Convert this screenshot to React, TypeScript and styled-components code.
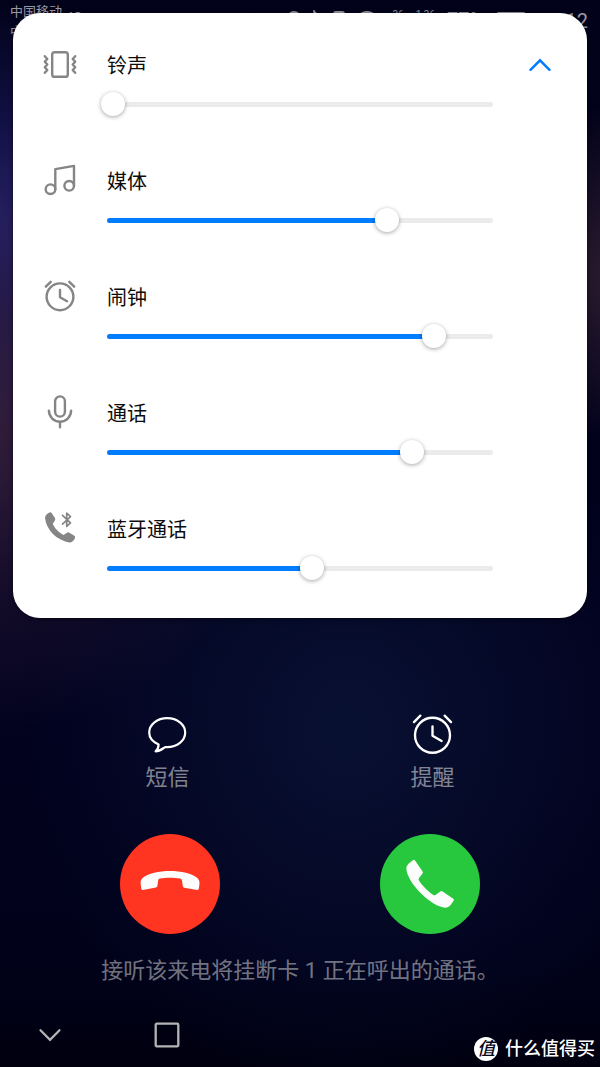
import React, { useState } from "react";
import styled, { createGlobalStyle } from "styled-components";

const GlobalStyle = createGlobalStyle`
  * { box-sizing: border-box; }
  body {
    margin: 0;
    background: #00000f;
    font-family: Roboto, "Noto Sans CJK SC", sans-serif;
  }
  button {
    margin: 0;
    padding: 0;
    border: 0;
    background: none;
    font: inherit;
    color: inherit;
    cursor: pointer;
  }
  svg { display: block; }
`;

const Screen = styled.div`
  position: relative;
  display: flex;
  flex-direction: column;
  min-height: 100vh;
  overflow: hidden;
  background:
    radial-gradient(ellipse 330px 310px at -40px 430px, rgba(74, 44, 74, 0.72), rgba(74, 44, 74, 0.28) 50%, rgba(74, 44, 74, 0) 100%),
    radial-gradient(ellipse 260px 220px at -20px 220px, rgba(34, 32, 110, 0.9), rgba(34, 32, 110, 0) 100%),
    radial-gradient(ellipse 160px 170px at 103% 275px, rgba(50, 32, 50, 0.85), rgba(50, 32, 50, 0) 100%),
    radial-gradient(ellipse 320px 360px at 58% 730px, rgba(9, 18, 52, 0.9), rgba(9, 18, 52, 0) 100%),
    linear-gradient(#02021a, #01011c 40%, #02021f 65%, #01011a 90%, #00000f);
`;

const StatusBar = styled.div`
  display: flex;
  justify-content: space-between;
  height: 38px;
  padding: 3px 12px 0 10px;
  color: rgba(255, 255, 255, 0.6);
`;

const Carriers = styled.div`
  display: flex;
  flex-direction: column;
  font-size: 13px;
  line-height: 17px;
`;

const Carrier = styled.span`
  display: flex;
  align-items: flex-start;
  gap: 4px;
`;

const Network = styled.small`
  padding-top: 7px;
  font-size: 13px;
  line-height: 13px;
`;

const StatusIcons = styled.div`
  display: flex;
  align-items: flex-start;
  gap: 12px;
  padding-top: 7px;
`;

const StatusText = styled.span<{ $size: number }>`
  font-size: ${(p) => p.$size}px;
  line-height: ${(p) => p.$size}px;
`;

const Clock = styled.time`
  padding-top: 1px;
  font-size: 20px;
  line-height: 20px;
`;

const VolumePanel = styled.section`
  position: relative;
  display: flex;
  flex-direction: column;
  gap: 50px;
  margin: -25px 13px 0;
  padding: 37px 0 38px;
  border-radius: 27px;
  background: #fff;
  box-shadow: 0 1px 5px rgba(0, 0, 0, 0.5);
`;

const VolumeRow = styled.div`
  display: grid;
  grid-template-columns: 94px 1fr 94px;
  grid-template-rows: 30px 24px;
  row-gap: 12px;
  align-items: center;
`;

const RowIcon = styled.span`
  justify-self: center;
  color: #858585;
`;

const RowLabel = styled.label`
  padding-top: 2px;
  color: #0c0c0c;
  font-size: 20px;
  line-height: 28px;
`;

const CollapseButton = styled.button`
  justify-self: center;
  padding: 4px;
  color: #007dff;
`;

const SliderArea = styled.div`
  grid-column: 2;
  display: grid;
  align-items: center;
  > * { grid-area: 1 / 1; }
`;

const Track = styled.div`
  height: 5px;
  border-radius: 3px;
  background: #ebebeb;
  overflow: hidden;
`;

const Fill = styled.div`
  height: 100%;
  background: #007dff;
`;

const Range = styled.input`
  appearance: none;
  height: 24px;
  margin: 0 -6px;
  background: transparent;
  cursor: pointer;

  &::-webkit-slider-runnable-track {
    height: 24px;
    background: transparent;
  }
  &::-webkit-slider-thumb {
    appearance: none;
    width: 24px;
    height: 24px;
    border-radius: 50%;
    background: #fff;
    box-shadow: 0 1px 4px rgba(0, 0, 0, 0.36);
  }
`;

const Actions = styled.div`
  display: grid;
  grid-template-columns: 1fr 1fr;
  margin-top: 93px;
  padding: 0 35px;
`;

const Action = styled.button`
  display: flex;
  flex-direction: column;
  align-items: center;
  gap: 5px;
  justify-self: center;
  color: #fff;
`;

const ActionIcon = styled.span`
  display: flex;
  align-items: center;
  height: 48px;
`;

const ActionLabel = styled.span`
  color: rgba(255, 255, 255, 0.5);
  font-size: 22px;
  line-height: 28px;
`;

const Calls = styled.div`
  display: grid;
  grid-template-columns: 1fr 1fr;
  justify-items: center;
  margin-top: 42px;
  padding: 0 40px;
`;

const CallButton = styled.button<{ $color: string }>`
  width: 100px;
  height: 100px;
  border-radius: 50%;
  background: ${(p) => p.$color};
  color: #fcfcfc;
`;

const Notice = styled.p`
  margin: 22px 0 17px;
  color: rgba(255, 255, 255, 0.46);
  font-size: 22px;
  line-height: 30px;
  text-align: center;
`;

const NavBar = styled.nav`
  display: flex;
  height: 64px;
  margin-top: auto;
  color: #b4b4b4;
`;

const NavButton = styled.button<{ $width: number }>`
  display: flex;
  align-items: center;
  justify-content: center;
  width: ${(p) => p.$width}px;
`;

const Watermark = styled.div`
  position: absolute;
  right: 5px;
  bottom: 6px;
  display: flex;
  align-items: center;
  gap: 7px;
  color: #fff;
  font-size: 18px;
  font-weight: 500;
  line-height: 24px;
`;

const Badge = styled.span`
  width: 24px;
  height: 24px;
  border-radius: 50%;
  background: #fff;
  color: #05051a;
  font-size: 18px;
  font-style: italic;
  text-align: center;
`;

type IconProps = { size?: number; stroke?: number };

const LineIcon = ({ size = 36, stroke = 2.4, children }: IconProps & { children: React.ReactNode }) => (
  <svg
    width={size}
    height={size}
    viewBox="0 0 36 36"
    fill="none"
    stroke="currentColor"
    strokeWidth={stroke}
    strokeLinecap="round"
    strokeLinejoin="round"
    aria-hidden="true"
  >
    {children}
  </svg>
);

const VibrateIcon = () => (
  <LineIcon>
    <rect x="10.2" y="5.2" width="15.6" height="24.6" rx="2.4" />
    <path d="M2.8 9.2 5.3 12 2.8 14.7 5.3 17.5 2.8 20.3 5.3 23 2.8 25.8M33.2 9.2 30.7 12 33.2 14.7 30.7 17.5 33.2 20.3 30.7 23 33.2 25.8" />
  </LineIcon>
);

const MusicIcon = () => (
  <LineIcon>
    <circle cx="8.5" cy="26.2" r="4.8" />
    <circle cx="27.2" cy="22.8" r="4.8" />
    <path d="M13.3 26.2V6.1L32 2.9V22.8" />
  </LineIcon>
);

const AlarmIcon = (props: IconProps) => (
  <LineIcon {...props}>
    <circle cx="18" cy="17.8" r="13.4" />
    <path d="M18 11V18.2L25 22.2M3.8 7.7 8.7 2.8M32.2 7.7 27.3 2.8" />
  </LineIcon>
);

const MicIcon = () => (
  <LineIcon>
    <rect x="13.1" y="1.4" width="9.8" height="20.2" rx="4.9" />
    <path d="M6.9 15.6C6.9 22.2 12 26.6 18 26.6S29.1 22.2 29.1 15.6M18 26.6V32.2" />
  </LineIcon>
);

const BluetoothCallIcon = () => (
  <LineIcon stroke={1.7}>
    <path
      d="M3 6.9C3 4.7 5 2.5 7.4 1.4Q8.9 .8 9.8 2.2L12.9 7Q13.6 8.2 12.9 9.4L10.8 12.7C12.5 17.3 16.8 21.3 21.6 23.9L25 21.7Q26.2 21 27.4 21.7L32.3 24.8Q33.6 25.8 32.9 27.2C31.7 29.8 29.4 31.8 27.2 31.4C14.6 29 4.4 19 3 6.9Z"
      fill="currentColor"
      stroke="none"
    />
    <path d="M20.5 4.4 28.5 11.9 24.7 15.4V2.2L28.5 5.7 20.5 13.2" />
  </LineIcon>
);

const MessageIcon = () => (
  <svg width="40" height="40" viewBox="0 0 40 40" fill="none" stroke="currentColor" strokeWidth="2.2" strokeLinejoin="round" aria-hidden="true">
    <path d="M11.6 29.6C5.8 27 2.2 22.7 2.2 17.6 2.2 9.4 10.2 3.1 20.2 3.1S38.2 9.4 38.2 17.6 30.2 32.2 20.2 32.2C19.4 32.2 18.9 32.2 18.1 32.1 15.6 33.6 12.8 36.4 8.6 36.3 11 34.4 11.5 32.2 11.6 29.6Z" />
  </svg>
);

const HandsetIcon = ({ angle = 0 }: { angle?: number }) => (
  <svg width="100" height="100" viewBox="0 0 100 100" fill="currentColor" aria-hidden="true">
    <path
      transform={`rotate(${angle} 50 50)`}
      d="M21.3 54.5 20.6 49.5Q20.3 46.5 22.3 44.2C28 39.2 39 37 50 37S72 39.2 77.7 44.2Q79.7 46.5 79.5 49.5L78.9 54.6Q78.7 56.3 77 56L64.3 53.7Q63 53.5 62.8 52.2L62 46.5Q61.8 45 60 44.6C54 43.4 46 43.4 40 44.6 38.6 45 38.4 45.4 38.2 46.5L37.4 52Q37.2 53.4 35.9 53.6L23 56Q21.5 56.2 21.3 54.5Z"
    />
  </svg>
);

const ChevronIcon = ({ up, stroke }: { up?: boolean; stroke: number }) => (
  <svg width="24" height="14" viewBox="0 0 24 14" fill="none" stroke="currentColor" strokeWidth={stroke} strokeLinecap="round" aria-hidden="true">
    <path d={up ? "M2.5 11.8 12 2.3 21.5 11.8" : "M2.5 2.3 12 11.8 21.5 2.3"} />
  </svg>
);

const StatusGlyphs = () => (
  <svg width="94" height="16" viewBox="0 0 94 16" fill="none" stroke="currentColor" strokeWidth="2" aria-hidden="true">
    <circle cx="8" cy="8" r="6" />
    <path d="M25 12 32 6 28 1V15L32 11 25 5" strokeWidth="1.5" />
    <rect x="48" y="2" width="10" height="14" rx="2" />
    <path d="M72 6Q81-2 90 6M76 10Q81 6 86 10" />
  </svg>
);

const BatteryIcon = () => (
  <svg width="30" height="14" viewBox="0 0 30 14" fill="none" stroke="currentColor" strokeWidth="2" aria-hidden="true">
    <rect x="1" y="3" width="28" height="10" rx="2" />
  </svg>
);

type Channel = { id: string; label: string; value: number; max: number; icon: React.ReactNode };

const channels: Channel[] = [
  { id: "ring", label: "铃声", value: 0, max: 15, icon: <VibrateIcon /> },
  { id: "media", label: "媒体", value: 11, max: 15, icon: <MusicIcon /> },
  { id: "alarm", label: "闹钟", value: 6, max: 7, icon: <AlarmIcon /> },
  { id: "call", label: "通话", value: 4, max: 5, icon: <MicIcon /> },
  { id: "bluetooth", label: "蓝牙通话", value: 8, max: 15, icon: <BluetoothCallIcon /> },
];

const VolumeControl = ({ channel, collapsible }: { channel: Channel; collapsible: boolean }) => {
  const [value, setValue] = useState(channel.value);
  const ratio = value / channel.max;
  return (
    <VolumeRow>
      <RowIcon>{channel.icon}</RowIcon>
      <RowLabel htmlFor={channel.id}>{channel.label}</RowLabel>
      {collapsible && (
        <CollapseButton type="button" aria-label="收起">
          <ChevronIcon up stroke={2.4} />
        </CollapseButton>
      )}
      <SliderArea>
        <Track>
          <Fill style={{ width: `calc(6px + (100% - 12px) * ${ratio})` }} />
        </Track>
        <Range
          id={channel.id}
          type="range"
          min={0}
          max={channel.max}
          value={value}
          onChange={(e) => setValue(Number(e.target.value))}
        />
      </SliderArea>
    </VolumeRow>
  );
};

export default function App() {
  return (
    <Screen>
      <GlobalStyle />
      <StatusBar>
        <Carriers>
          <Carrier>中国移动<Network>4G</Network></Carrier>
          <Carrier>中国移动</Carrier>
        </Carriers>
        <StatusIcons>
          <StatusGlyphs />
          <StatusText $size={10}>36</StatusText>
          <StatusText $size={10}>1 36</StatusText>
          <StatusText $size={20}>77%</StatusText>
          <BatteryIcon />
          <Clock>10:12</Clock>
        </StatusIcons>
      </StatusBar>

      <VolumePanel>
        {channels.map((channel, i) => (
          <VolumeControl key={channel.id} channel={channel} collapsible={i === 0} />
        ))}
      </VolumePanel>

      <Actions>
        <Action type="button">
          <ActionIcon><MessageIcon /></ActionIcon>
          <ActionLabel>短信</ActionLabel>
        </Action>
        <Action type="button">
          <ActionIcon><AlarmIcon size={47} stroke={1.8} /></ActionIcon>
          <ActionLabel>提醒</ActionLabel>
        </Action>
      </Actions>

      <Calls>
        <CallButton type="button" $color="#ff3421" aria-label="挂断">
          <HandsetIcon />
        </CallButton>
        <CallButton type="button" $color="#27c73e" aria-label="接听">
          <HandsetIcon angle={-135} />
        </CallButton>
      </Calls>

      <Notice>接听该来电将挂断卡 1 正在呼出的通话。</Notice>

      <NavBar>
        <NavButton type="button" $width={100} aria-label="返回">
          <ChevronIcon stroke={2.3} />
        </NavButton>
        <NavButton type="button" $width={133} aria-label="主屏幕">
          <svg width="26" height="26" viewBox="0 0 26 26" fill="none" stroke="currentColor" strokeWidth="2.3" aria-hidden="true">
            <rect x="1.7" y="1.7" width="22.6" height="22.6" rx="1" />
          </svg>
        </NavButton>
      </NavBar>

      <Watermark>
        <Badge>值</Badge>
        什么值得买
      </Watermark>
    </Screen>
  );
}
